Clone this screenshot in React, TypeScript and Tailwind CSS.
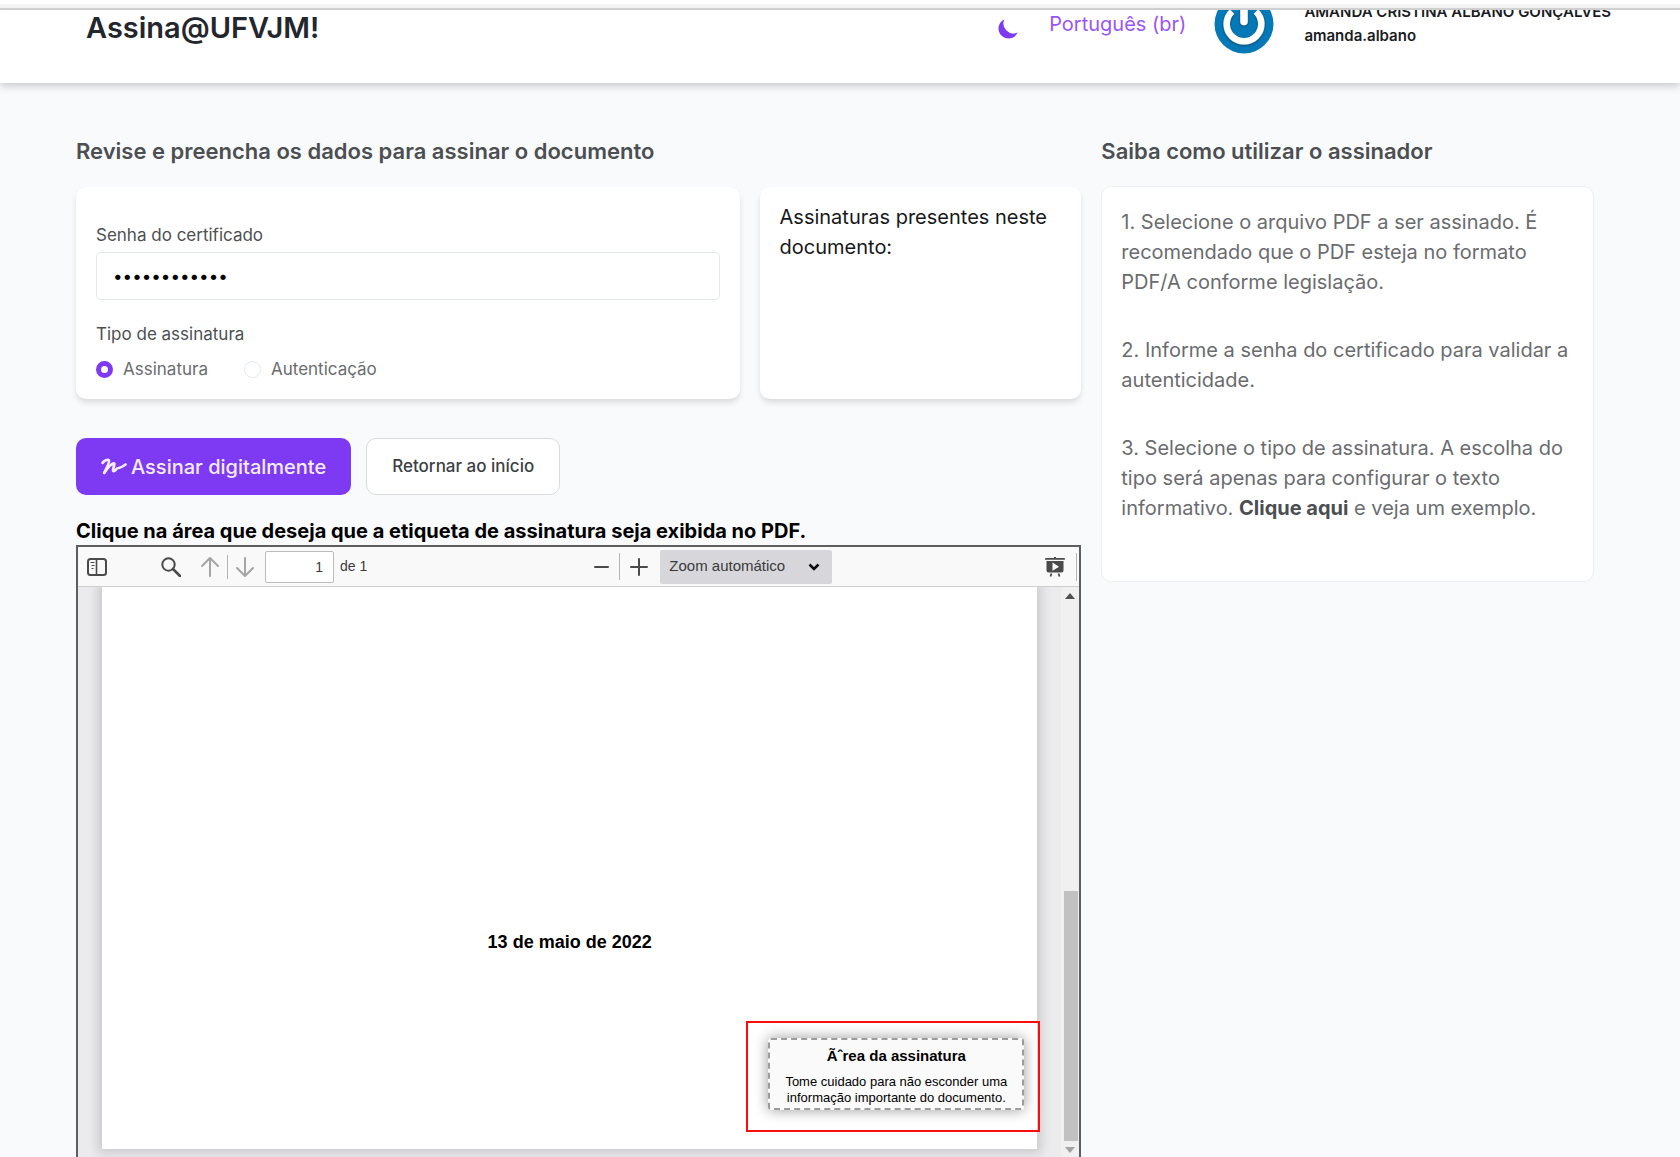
import { useState } from "react";
import { HiMoon } from "react-icons/hi";

function Avatar() {
  return (
    <svg viewBox="0 0 60 60" className="h-15 w-15 shrink-0" role="img" aria-label="Avatar">
      <defs>
        <filter id="soft" x="-20%" y="-20%" width="140%" height="140%">
          <feDropShadow dx="0" dy="1" stdDeviation="1.2" floodColor="#27221c" floodOpacity="0.6" />
        </filter>
      </defs>
      <circle cx="30" cy="30" r="29.5" fill="#0578b8" />
      <g fill="none" stroke="#ffffff" filter="url(#soft)">
        <path d="M18 17.500A17.300 17.300 0 1 0 42 17.500" strokeWidth="6.500" />
        <path d="M30 8V27.500" strokeWidth="7.500" strokeLinecap="round" />
      </g>
    </svg>
  );
}

function SignatureIcon() {
  return (
    <svg viewBox="0 0 26 18" className="h-[18px] w-[26px]" fill="none" stroke="currentColor" strokeLinecap="round" strokeLinejoin="round" aria-hidden="true">
      <path d="M1.5 5C3 2.5 7 1 8 2.500C8.800 4 5.500 10 3.300 14.800" strokeWidth="2.600" />
      <path d="M3.300 14.800C6.500 10 10.500 5.500 12.800 5.300C14.800 5.300 11 11.500 12.200 13C13.500 14 15.500 10 17.200 10C18.500 10 18.500 10.500 24.500 6.500" strokeWidth="2.700" />
    </svg>
  );
}

function SidebarIcon() {
  return (
    <svg viewBox="0 0 20 18" className="h-[18px] w-5" fill="none" stroke="#4a4a4b" aria-hidden="true">
      <rect x="1" y="1" width="18" height="16" rx="2.500" strokeWidth="2" />
      <path d="M9.500 1V17" strokeWidth="1.600" />
      <path d="M3.500 4.500H7.500M4.500 7.500H7.500M4.500 10.500H6.500" strokeWidth="1.200" />
    </svg>
  );
}

function SearchIcon() {
  return (
    <svg viewBox="0 0 20 20" className="h-5 w-5" fill="none" stroke="#4a4a4b" aria-hidden="true">
      <circle cx="7.500" cy="7.500" r="6.200" strokeWidth="2" />
      <path d="M12 12L19 19" strokeWidth="2.600" strokeLinecap="round" />
    </svg>
  );
}

function ArrowIcon({ down = false }: { down?: boolean }) {
  return (
    <svg viewBox="0 0 18 20" className="h-5 w-[18px]" fill="none" stroke="#a5a5a6" strokeWidth="2" strokeLinecap="round" strokeLinejoin="round" aria-hidden="true">
      {down ? <path d="M9 1V19M1 11L9 19L17 11" /> : <path d="M9 19V1M1 9L9 1L17 9" />}
    </svg>
  );
}

function PresentationIcon() {
  return (
    <svg viewBox="0 0 20 20" className="h-5 w-5" fill="#4a4a4b" aria-hidden="true">
      <rect x="0" y="1" width="20" height="1.800" rx="0.900" />
      <rect x="9" y="0" width="2" height="2" />
      <path d="M1.500 4H18.500V13.500A2 2 0 0 1 16.500 15.500H3.500A2 2 0 0 1 1.500 13.500Z" />
      <path d="M7.500 5.500L14 9.700L7.500 13.800Z" fill="#f9f9fa" />
      <path d="M6.500 16.500L5.500 19.500M13.500 16.500L14.500 19.500" stroke="#4a4a4b" strokeWidth="1.800" />
    </svg>
  );
}

function Header() {
  return (
    <header className="relative overflow-hidden bg-white shadow-[0_3px_8px_rgba(0,0,0,0.2)]">
      <div className="-mt-[17px] mb-[29px] flex h-[61px] items-center pr-[69px] pl-[86px]">
        <h1 className="flex-1 pt-2 text-[29px] leading-9 font-semibold text-[#24262d]">Assina@UFVJM!</h1>
        <button type="button" aria-label="Alternar tema" className="mr-7 pt-2.5 text-[#7e3af2]">
          <HiMoon className="h-[25px] w-[25px]" />
        </button>
        <button type="button" className="mr-7 text-[20px] leading-[30px] text-[#9a55f7]">Português (br)</button>
        <Avatar />
        <div className="ml-[30px] text-[15px] leading-6 font-semibold text-[#1a1c23]">
          <p className="whitespace-nowrap">AMANDA CRISTINA ALBANO GONÇALVES</p>
          <p>amanda.albano</p>
        </div>
      </div>
    </header>
  );
}

const radioClass =
  "h-[17px] w-[17px] appearance-none rounded-full border border-[#e2e8f0] bg-white checked:border-[5px] checked:border-[#7e3af2]";

function SignatureForm() {
  const [kind, setKind] = useState("assinatura");
  return (
    <div className="col-span-2 rounded-[10px] bg-white px-5 pt-9 pb-[17px] shadow-[0_4px_6px_-1px_rgba(0,0,0,0.14)]">
      <label htmlFor="senha" className="block text-[17px] leading-[25px] text-[#4c4f52]">Senha do certificado</label>
      <input
        id="senha"
        type="password"
        defaultValue="certificado1"
        className="mt-1 block h-12 w-full rounded-[5px] border border-[#e2e8f0] bg-white px-4 text-[17px] text-black"
      />
      <fieldset className="mt-[22px]">
        <legend className="text-[17px] leading-[25px] text-[#4c4f52]">Tipo de assinatura</legend>
        <div className="mt-2.5 flex gap-9 text-[17px] leading-[25px] text-[#6a6c6f]">
          <label className="flex items-center gap-2.5">
            <input type="radio" name="tipo" checked={kind === "assinatura"} onChange={() => setKind("assinatura")} className={radioClass} />
            Assinatura
          </label>
          <label className="flex items-center gap-2.5">
            <input type="radio" name="tipo" checked={kind === "autenticacao"} onChange={() => setKind("autenticacao")} className={radioClass} />
            Autenticação
          </label>
        </div>
      </fieldset>
    </div>
  );
}

function Toolbar() {
  return (
    <div className="flex h-10 items-center justify-between border-b border-[#cfcfd0] bg-[#f9f9fa] pr-0.5 pl-[9px] font-['Liberation_Sans',sans-serif] text-[14px] text-[#3a3a3b]">
      <div className="flex items-center">
        <button type="button" aria-label="Exibir painel"><SidebarIcon /></button>
        <button type="button" aria-label="Localizar" className="ml-[54px]"><SearchIcon /></button>
        <button type="button" aria-label="Página anterior" className="ml-5"><ArrowIcon /></button>
        <span className="mx-2 h-6 w-px bg-[#b5b5b6]" />
        <button type="button" aria-label="Próxima página"><ArrowIcon down /></button>
        <input aria-label="Página" defaultValue="1" className="ml-[11px] h-8 w-[69px] rounded-[2px] border border-[#bcbcbd] bg-white px-2.5 text-right" />
        <span className="ml-1.5">de 1</span>
      </div>
      <div className="flex items-center pl-3.5">
        <button type="button" aria-label="Reduzir" className="flex h-5 w-[15px] items-center"><span className="h-[2px] w-full rounded-full bg-[#4a4a4b]" /></button>
        <span className="mx-2.5 h-[27px] w-px bg-[#b5b5b6]" />
        <button type="button" aria-label="Ampliar">
          <svg viewBox="0 0 18 18" className="h-[18px] w-[18px]" stroke="#4a4a4b" strokeWidth="2" strokeLinecap="round" aria-hidden="true">
            <path d="M9 1V17M1 9H17" />
          </svg>
        </button>
        <div className="relative ml-3 flex items-center">
          <select aria-label="Zoom" className="h-[34px] w-[172px] appearance-none rounded-[2px] bg-[#d7d7db] pl-[9px] text-[15px]">
            <option>Zoom automático</option>
          </select>
          <svg viewBox="0 0 12 8" className="pointer-events-none absolute right-3 h-2 w-3" fill="none" stroke="#0c0c0d" strokeWidth="2.500" aria-hidden="true">
            <path d="M1.500 1.500L6 6L10.500 1.500" />
          </svg>
        </div>
      </div>
      <div className="flex items-center gap-[11px]">
        <button type="button" aria-label="Modo apresentação"><PresentationIcon /></button>
        <span className="h-7 w-px bg-[#b5b5b6]" />
      </div>
    </div>
  );
}

function Scrollbar() {
  return (
    <div className="flex w-[18px] flex-col items-center bg-[#f0f0f0]">
      <svg viewBox="0 0 10 6" className="mt-1.5 h-1.5 w-2.5 shrink-0" fill="#505050" aria-hidden="true"><path d="M0 6L5 0L10 6Z" /></svg>
      <div className="flex w-full flex-1 flex-col justify-end pr-px pl-[3px]">
        <div className="h-[250px] bg-[#c1c1c1]" />
      </div>
      <svg viewBox="0 0 10 6" className="mt-1.5 mb-1 h-1.5 w-2.5 shrink-0" fill="#a3a3a3" aria-hidden="true"><path d="M0 0L5 6L10 0Z" /></svg>
    </div>
  );
}

function PdfViewer() {
  return (
    <section aria-label="Visualizador de PDF" className="flex flex-1 flex-col border-x-2 border-t-2 border-[#5e5e5f]">
      <Toolbar />
      <div className="flex flex-1">
        <div className="flex flex-1 flex-col overflow-hidden bg-[#ebebed] px-6 pb-2 font-['Liberation_Sans',sans-serif]">
          <div className="relative min-h-[520px] flex-1 bg-white pt-[343px] shadow-[0_0_10px_4px_rgba(0,0,0,0.14)]">
            <p className="text-center text-[18px] leading-6 font-bold text-black">13 de maio de 2022</p>
            <div className="absolute -right-[3px] bottom-[17px] border-2 border-[#fb0d0d] pt-[15px] pr-3.5 pb-5 pl-5">
              <div className="w-64 rounded-[3px] border-2 border-dashed border-[#9c9c9c] bg-[#fafafa] pt-1.5 pb-0.5 text-center text-black shadow-[0_0_14px_rgba(0,0,0,0.4)]">
                <p className="text-[15px] leading-5 font-bold">Ãˆrea da assinatura</p>
                <p className="mt-2 text-[13px] leading-4">
                  Tome cuidado para não esconder uma informação importante do documento.
                </p>
              </div>
            </div>
          </div>
        </div>
        <Scrollbar />
      </div>
    </section>
  );
}

export default function App() {
  return (
    <div className="flex min-h-screen flex-col bg-[#f9fafc] font-['Inter',sans-serif] text-black">
      <div className="h-2.5 border-t-4 border-b-2 border-t-white border-b-[#d6d6d6] bg-[#f5f5f5]" />
      <Header />
      <main className="grid flex-1 grid-cols-3 gap-5 pt-[52px] pr-[86px] pl-[76px]">
        <div className="col-span-2 flex flex-col">
          <h2 className="text-[22px] leading-8 font-semibold text-[#4c4f52]">Revise e preencha os dados para assinar o documento</h2>
          <div className="mt-5 grid grid-cols-3 gap-5">
            <SignatureForm />
            <div className="rounded-[10px] bg-white px-5 py-[15px] text-[20px] leading-[30px] text-[#17181b] shadow-[0_4px_6px_-1px_rgba(0,0,0,0.14)]">
              Assinaturas presentes neste documento:
            </div>
          </div>
          <div className="mt-[39px] flex items-center gap-[15px]">
            <button type="button" className="flex h-[57px] items-center gap-1 rounded-[10px] bg-[#7e3af2] px-[25px] text-[20px] font-medium text-[#f3ecfe]">
              <SignatureIcon />
              Assinar digitalmente
            </button>
            <button type="button" className="h-[57px] rounded-[10px] border border-[#dadbde] bg-white px-[25px] text-[17px] font-medium text-[#3c3f44]">
              Retornar ao início
            </button>
          </div>
          <p className="mt-[22px] text-[20px] leading-7 font-bold">Clique na área que deseja que a etiqueta de assinatura seja exibida no PDF.</p>
          <PdfViewer />
        </div>
        <aside>
          <h2 className="text-[22px] leading-8 font-semibold text-[#4c4f52]">Saiba como utilizar o assinador</h2>
          <div className="mt-[19px] rounded-[10px] border border-[#eeeff1] bg-white px-[19px] pt-5 pb-[58px] text-[20px] leading-[30px] text-[#6a6c6f]">
            <p>1. Selecione o arquivo PDF a ser assinado. É recomendado que o PDF esteja no formato PDF/A conforme legislação.</p>
            <p className="mt-[38px]">2. Informe a senha do certificado para validar a autenticidade.</p>
            <p className="mt-[38px]">
              3. Selecione o tipo de assinatura. A escolha do tipo será apenas para configurar o texto informativo.{" "}
              <a href="#exemplo" className="font-bold text-[#4c4f52]">Clique aqui</a> e veja um exemplo.
            </p>
          </div>
        </aside>
      </main>
    </div>
  );
}
